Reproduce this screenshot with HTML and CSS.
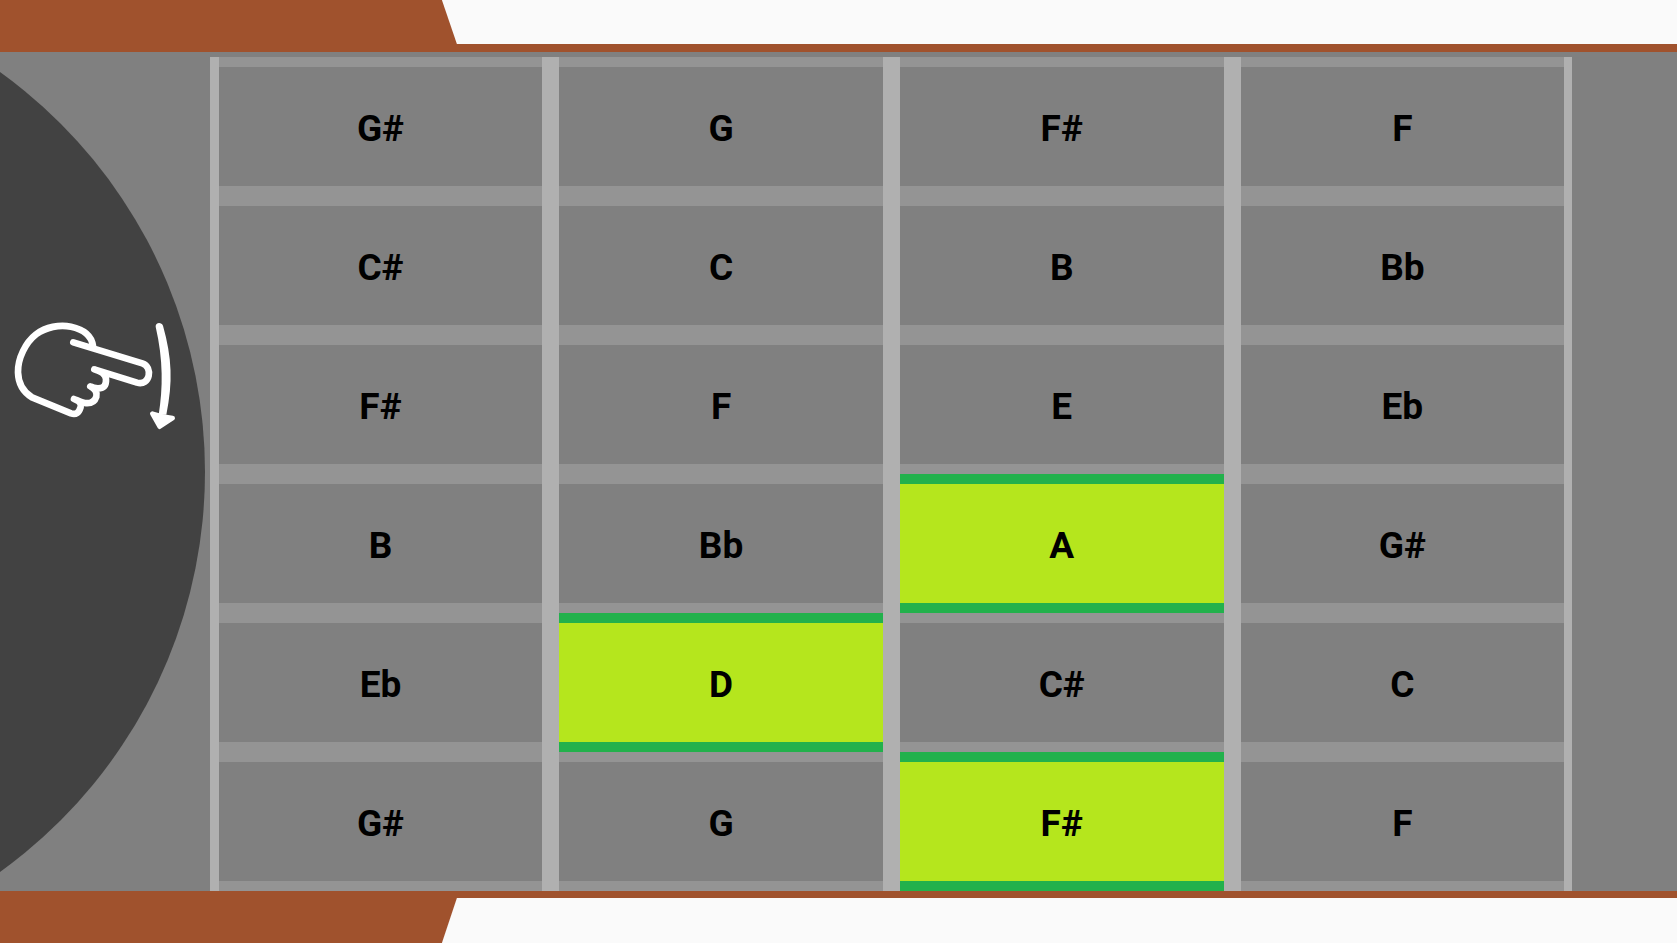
FILE: index.html
```html
<!DOCTYPE html>
<html lang="en">
<head>
<meta charset="utf-8">
<title>Guitar chord</title>
<link rel="stylesheet" href="styles.css">
</head>
<body>
<header class="edge edge-top"><div class="cutout"></div></header>
<main class="neck">
  <section class="strum" aria-label="Strum">
    <div class="sound-hole"></div>
    <svg class="hand" viewBox="0 0 660 390" fill="none" stroke="#fff" stroke-width="20" stroke-linecap="round" stroke-linejoin="round" aria-hidden="true">
      <path d="M220 97 L427 160 C460 171 450 229 411 218 L283 178 C303 184 318 192 318 208 C319 228 310 235 294 235 C284 235 277 233 271 229 C284 236 292 247 289 260 C284 276 270 281 254 279 C240 276 230 270 222 267 C238 273 245 281 242 291 C237 308 228 315 213 310 L96 262 C70 246 55 222 54 187 C53 145 77 97 108 73 C138 51 178 43 213 50 C250 58 275 78 279 108"/>
      <path fill="#fff" stroke="none" d="M467 50 C466 36 485 35 489 47 C516 145 519 215 499 314 L476 314 C489 235 490 150 467 50 Z"/>
      <path stroke-width="14" fill="#fff" d="M457 311 Q488 322 518 324 L479 350 Z"/>
    </svg>
  </section>
  <section class="frets" aria-label="Frets">
    <button class="note">G#</button><button class="note">G</button><button class="note">F#</button><button class="note">F</button>
    <button class="note">C#</button><button class="note">C</button><button class="note">B</button><button class="note">Bb</button>
    <button class="note">F#</button><button class="note">F</button><button class="note">E</button><button class="note">Eb</button>
    <button class="note">B</button><button class="note">Bb</button><button class="note active">A</button><button class="note">G#</button>
    <button class="note">Eb</button><button class="note active">D</button><button class="note">C#</button><button class="note">C</button>
    <button class="note">G#</button><button class="note">G</button><button class="note active">F#</button><button class="note">F</button>
  </section>
</main>
<footer class="edge edge-bottom"><div class="cutout"></div></footer>
</body>
</html>
```
FILE: styles.css
```css
* {
  box-sizing: border-box;
}

body {
  margin: 0;
  height: 100vh;
  display: flex;
  flex-direction: column;
  overflow: hidden;
  background: #808080;
  font-family: Roboto, "Liberation Sans", sans-serif;
}

.edge {
  flex: 0 0 52px;
  display: flex;
  justify-content: flex-end;
  background: #a0522d;
}

.edge-top {
  align-items: flex-start;
}

.edge-bottom {
  align-items: flex-end;
}

.cutout {
  width: 73.65%;
  height: 44px;
  background: #fafafa;
  clip-path: polygon(0 0, 100% 0, 100% 100%, 15px 100%);
}

.edge-bottom .cutout {
  height: 45px;
  clip-path: polygon(15px 0, 100% 0, 100% 100%, 0 100%);
}

.neck {
  flex: 1;
  min-height: 0;
  display: flex;
}

.strum {
  flex: 0 0 12.5%;
  position: relative;
  overflow: hidden;
}

.sound-hole {
  position: absolute;
  top: 50%;
  right: 5px;
  width: 985px;
  height: 985px;
  border-radius: 50%;
  background: #424242;
  transform: translateY(-50%);
}

.hand {
  position: absolute;
  top: 258px;
  left: 0;
  width: 220px;
  height: 130px;
}

.frets {
  flex: 1;
  display: grid;
  grid-template-columns: repeat(4, 1fr);
  grid-template-rows: repeat(6, 1fr);
  column-gap: 17px;
  margin: 5px 6.25% 0 0;
  padding: 0 8px 0 9px;
  background: #b0b0b0;
}

.note {
  min-width: 0;
  min-height: 0;
  margin: 0;
  padding: 4px 0 0;
  border: solid #949494;
  border-width: 10px 0;
  border-radius: 0;
  background: #808080;
  color: #000;
  font-family: inherit;
  font-size: 37px;
  font-weight: 700;
  line-height: 44px;
}

.note.active {
  border-color: #22b14c;
  background: #b5e61d;
}
```
